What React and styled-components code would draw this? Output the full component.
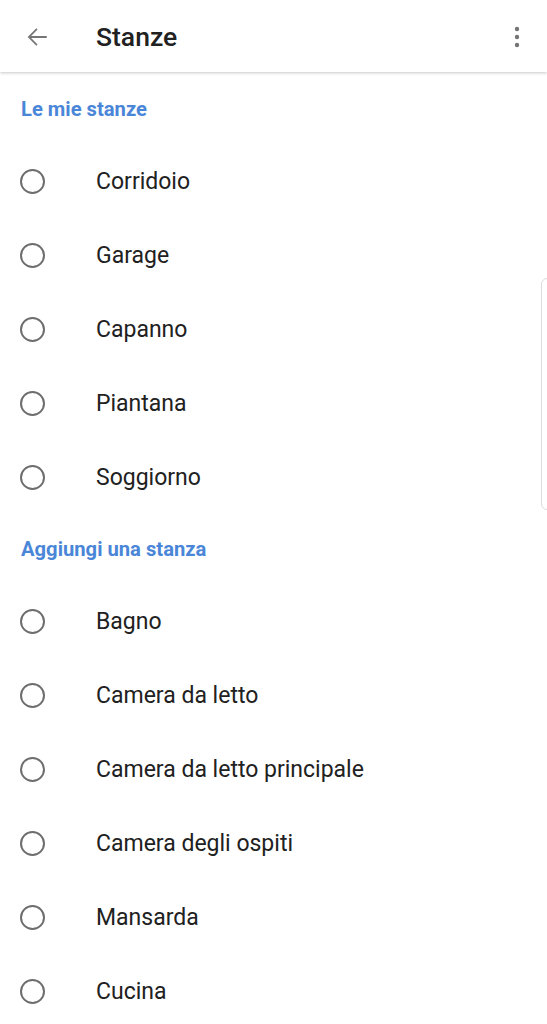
import React from 'react';
import styled, { createGlobalStyle } from 'styled-components';

const GlobalStyle = createGlobalStyle`
  html, body {
    margin: 0;
    padding: 0;
    background: #ffffff;
    font-family: Roboto, "Noto Sans", sans-serif;
  }
`;

const sections = [
  { title: 'Le mie stanze', rooms: ['Corridoio', 'Garage', 'Capanno', 'Piantana', 'Soggiorno'] },
  {
    title: 'Aggiungi una stanza',
    rooms: ['Bagno', 'Camera da letto', 'Camera da letto principale', 'Camera degli ospiti', 'Mansarda', 'Cucina'],
  },
];

const BackIcon = () => (
  <svg width="26" height="26" viewBox="0 0 24 24">
    <path d="M21 11H6.6l5.9-5.9-1.1-1.1L3.4 12l8 8 1.1-1.1L6.6 13H21z" fill="#757575" />
  </svg>
);

const MoreIcon = () => (
  <svg width="24" height="24" viewBox="0 0 24 24">
    <circle cx="12" cy="4" r="2.2" fill="#757575" />
    <circle cx="12" cy="12" r="2.2" fill="#757575" />
    <circle cx="12" cy="20" r="2.2" fill="#757575" />
  </svg>
);

const App = () => (
  <Page>
    <GlobalStyle />
    <Toolbar>
      <IconButton><BackIcon /></IconButton>
      <Title>Stanze</Title>
      <IconButton><MoreIcon /></IconButton>
    </Toolbar>
    <List>
      {sections.map((section) => (
        <Section key={section.title}>
          <SectionTitle>{section.title}</SectionTitle>
          {section.rooms.map((room) => (
            <Row key={room}>
              <Radio />
              <RoomName>{room}</RoomName>
            </Row>
          ))}
        </Section>
      ))}
    </List>
    <EdgeHandle />
  </Page>
);

export default App;

const Page = styled.div`
  position: relative;
  width: 547px;
  height: 1024px;
  overflow: hidden;
  background: #fff;
`;

const Toolbar = styled.div`
  position: relative;
  z-index: 1;
  display: flex;
  align-items: center;
  height: 72px;
  padding: 0 18px 0 24px;
  background: #fff;
  box-shadow: 0 1px 3px rgba(0, 0, 0, 0.22);
`;

const IconButton = styled.div`
  display: flex;
  margin-top: 2px;
`;

const Title = styled.div`
  flex: 1;
  margin-left: 46px;
  font-size: 26.5px;
  font-weight: 500;
  color: #212121;
`;

const List = styled.div`
  display: flex;
  flex-direction: column;
  padding-top: 2px;
`;

const Section = styled.div`
  display: flex;
  flex-direction: column;
`;

const SectionTitle = styled.div`
  display: flex;
  align-items: center;
  height: 70px;
  padding-left: 21px;
  font-size: 20.2px;
  font-weight: 700;
  color: #4a86d8;
`;

const Row = styled.div`
  display: flex;
  align-items: center;
  height: 74px;
  padding-left: 20px;
`;

const Radio = styled.div`
  box-sizing: border-box;
  width: 25px;
  height: 25px;
  border: 2.5px solid #6e6e6e;
  border-radius: 50%;
`;

const RoomName = styled.div`
  margin-left: 51px;
  font-size: 23px;
  color: #212121;
`;

const EdgeHandle = styled.div`
  position: absolute;
  top: 278px;
  right: -6px;
  width: 10px;
  height: 230px;
  border: 1px solid #dcdcdc;
  border-radius: 6px;
`;
